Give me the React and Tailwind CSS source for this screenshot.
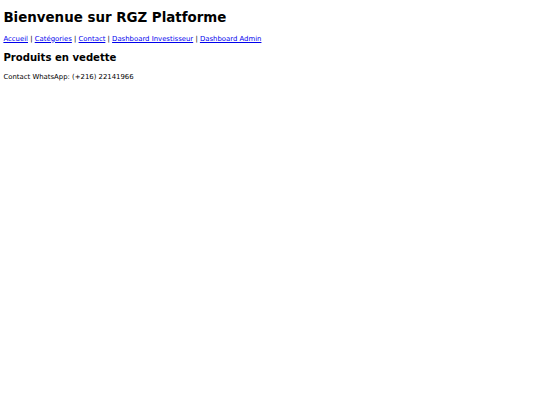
import React from "react";

const links = [
  "Accueil",
  "Catégories",
  "Contact",
  "Dashboard Investisseur",
  "Dashboard Admin",
];

const App = () => {
  return (
    <div className="min-h-screen bg-white text-black px-[3.4px] pt-[10px] font-['DejaVu_Sans',sans-serif] text-[6.9px] leading-[1.164]">
      <h1 className="text-[13.4px] font-bold leading-[1.164]">
        Bienvenue sur RGZ Platforme
      </h1>

      <nav className="mt-[9px]">
        {links.map((label, i) => (
          <React.Fragment key={label}>
            {i > 0 && " | "}
            <a href="#" className="text-[#0000ee] underline">
              {label}
            </a>
          </React.Fragment>
        ))}
      </nav>

      <h2 className="mt-[9px] text-[10.1px] font-bold leading-[1.164]">
        Produits en vedette
      </h2>

      {/* liste des produits vide */}
      <div className="mt-[10px]"></div>

      <p>Contact WhatsApp: (+216) 22141966</p>
    </div>
  );
};

export default App;
